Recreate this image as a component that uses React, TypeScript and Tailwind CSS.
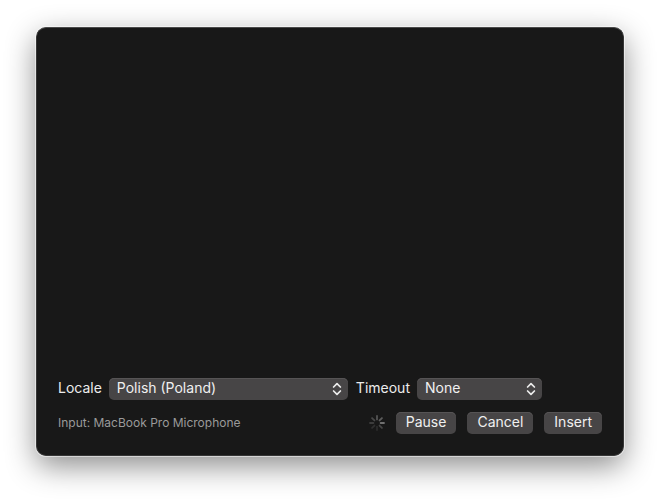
import clsx from "clsx"
import type { ReactNode } from "react"

interface PopUpProps {
  id: string
  label: string
  options: string[]
  className?: string
}

const PopUp = ({ id, label, options, className }: PopUpProps) => {
  return (
    <div className="flex items-center gap-[7px]">
      <label htmlFor={id} className="shrink-0 pb-0.5">
        {label}
      </label>
      <div className={clsx("relative", className)}>
        <select
          id={id}
          className="block h-[22px] w-full appearance-none rounded-[5px] bg-[#474546] pb-0.5 pl-2 pr-6 leading-5 text-[#f0f0f0] shadow-[inset_0_1px_0_#565455]"
        >
          {options.map((option) => (
            <option key={option}>{option}</option>
          ))}
        </select>
        <svg
          viewBox="0 0 10 14"
          className="pointer-events-none absolute right-[6px] top-1 h-[14px] w-[10px]"
          fill="none"
          stroke="#ececec"
          strokeWidth="1.7"
          strokeLinecap="round"
          strokeLinejoin="round"
          aria-hidden="true"
        >
          <path d="M1.6 5 5 1.6 8.4 5M1.6 9 5 12.4 8.4 9" />
        </svg>
      </div>
    </div>
  )
}

const PushButton = ({ children }: { children: ReactNode }) => {
  return (
    <button
      type="button"
      className="h-[22px] rounded-[5px] bg-[#474546] px-[10px] pb-0.5 leading-5 text-[#f0f0f0] shadow-[inset_0_1px_0_#565455]"
    >
      {children}
    </button>
  )
}

// clockwise from twelve o'clock
const spokes = [
  "#555555",
  "#5c5c5c",
  "#707070",
  "#454545",
  "#2c2c2c",
  "#303030",
  "#3c3c3c",
  "#484848",
]

const Spinner = () => {
  return (
    <svg
      viewBox="0 0 16 16"
      className="h-4 w-4"
      strokeWidth="1.8"
      strokeLinecap="round"
      role="img"
      aria-label="Listening"
    >
      {spokes.map((color, i) => (
        <path
          key={color}
          d="M8 4.4V1"
          stroke={color}
          transform={`rotate(${i * 45} 8 8)`}
        />
      ))}
    </svg>
  )
}

const App = () => {
  return (
    <main className="flex min-h-screen bg-white px-9 pb-11 pt-[27px] font-['Inter',sans-serif] text-sm text-[#ececec]">
      <section className="flex flex-1 flex-col justify-end gap-3 rounded-[10px] border border-[#363636] border-t-[#4a4a4a] bg-[#181818] px-[21px] pb-[21px] shadow-[0_0_0_1px_rgba(255,255,255,0.5),0_10px_30px_rgba(0,0,0,0.45)]">
        <div className="flex items-center gap-2">
          <PopUp
            id="locale"
            label="Locale"
            options={["Polish (Poland)"]}
            className="w-[239px]"
          />
          <PopUp
            id="timeout"
            label="Timeout"
            options={["None"]}
            className="w-[125px]"
          />
        </div>
        <div className="flex items-center justify-between">
          <p className="text-xs text-[#9a9a9a]">
            Input: MacBook Pro Microphone
          </p>
          <div className="flex items-center gap-[11px]">
            <Spinner />
            <PushButton>Pause</PushButton>
            <PushButton>Cancel</PushButton>
            <PushButton>Insert</PushButton>
          </div>
        </div>
      </section>
    </main>
  )
}
export default App
